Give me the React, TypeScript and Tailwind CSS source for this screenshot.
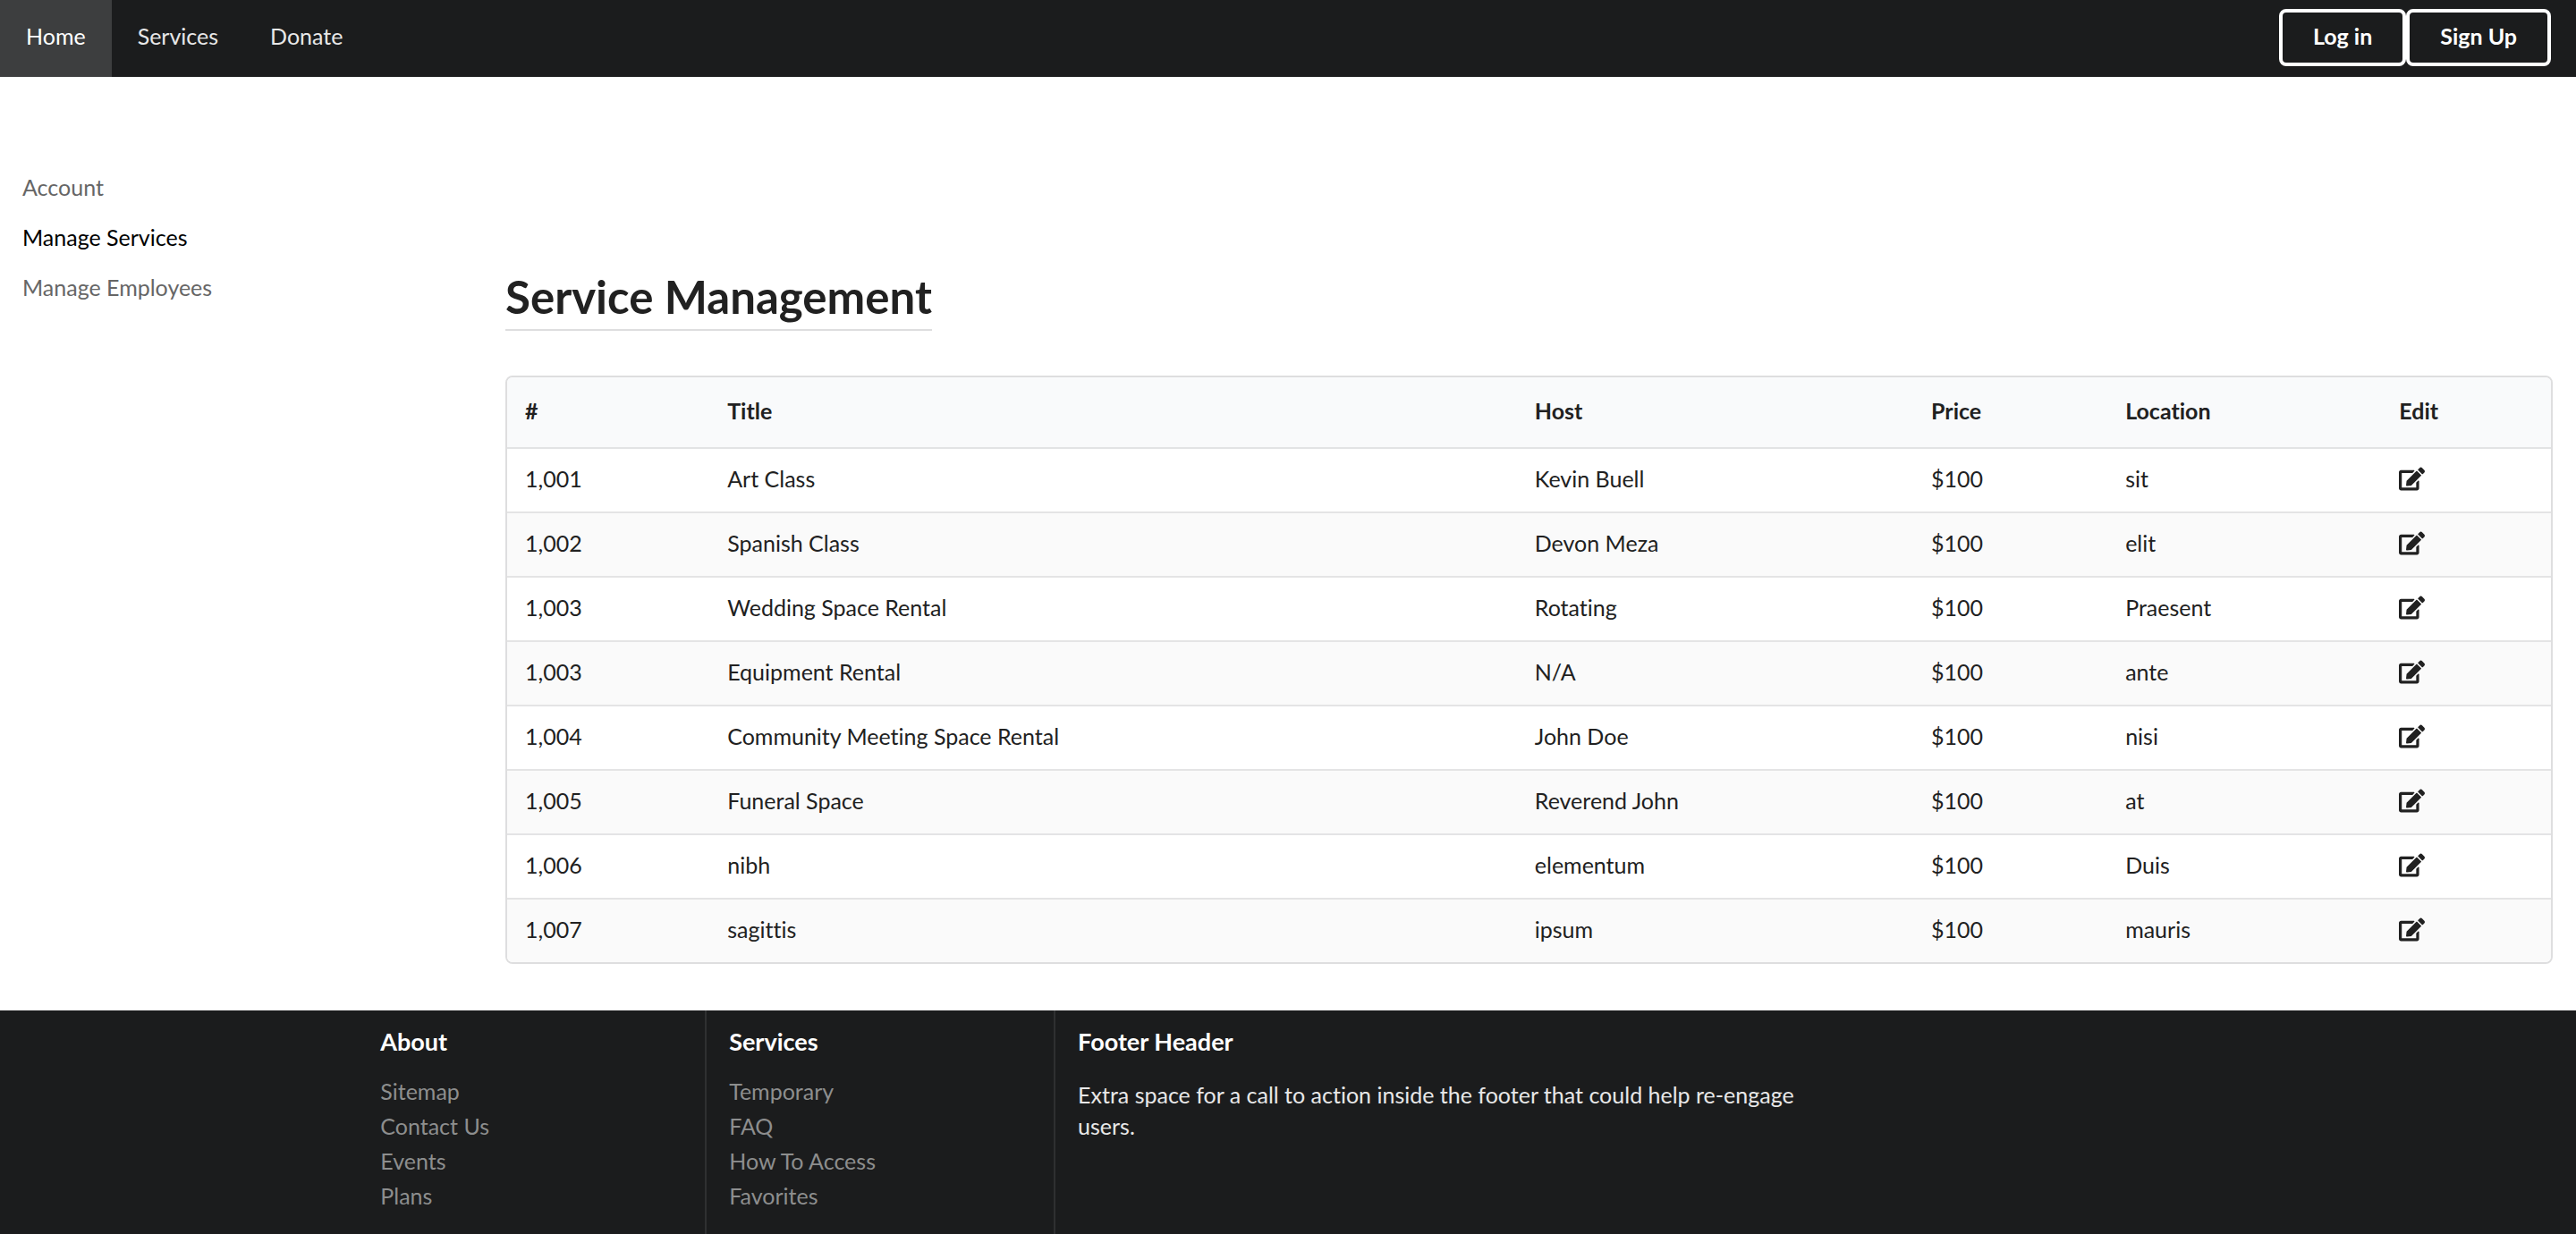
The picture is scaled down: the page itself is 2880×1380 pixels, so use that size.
import React from "react";
import { FaEdit } from "react-icons/fa";

const services = [
  ["1,001", "Art Class", "Kevin Buell", "$100", "sit"],
  ["1,002", "Spanish Class", "Devon Meza", "$100", "elit"],
  ["1,003", "Wedding Space Rental", "Rotating", "$100", "Praesent"],
  ["1,003", "Equipment Rental", "N/A", "$100", "ante"],
  ["1,004", "Community Meeting Space Rental", "John Doe", "$100", "nisi"],
  ["1,005", "Funeral Space", "Reverend John", "$100", "at"],
  ["1,006", "nibh", "elementum", "$100", "Duis"],
  ["1,007", "sagittis", "ipsum", "$100", "mauris"],
];

const columns = [
  { label: "#", width: "w-[9.9%]" },
  { label: "Title", width: "w-[39.5%]" },
  { label: "Host", width: "w-[19.4%]" },
  { label: "Price", width: "w-[9.5%]" },
  { label: "Location", width: "w-[13.4%]" },
  { label: "Edit", width: "w-[8.3%]" },
];

const footerLists = [
  { title: "About", links: ["Sitemap", "Contact Us", "Events", "Plans"] },
  { title: "Services", links: ["Temporary", "FAQ", "How To Access", "Favorites"] },
];

function TopBar() {
  return (
    <header className="flex h-[86px] items-stretch justify-between bg-[#1b1c1d] pr-7">
      <nav className="flex">
        <a href="#home" className="flex items-center bg-[#3d3e3f] px-[29px] pb-1.5 text-white">Home</a>
        <a href="#services" className="flex items-center px-[29px] pb-1.5 text-white/90">Services</a>
        <a href="#donate" className="flex items-center px-[29px] pb-1.5 text-white/90">Donate</a>
      </nav>
      <div className="flex items-center pb-0.5">
        <button type="button" className="h-16 rounded-lg border-4 border-white px-[34px] pb-1 font-bold text-white">Log in</button>
        <button type="button" className="h-16 rounded-lg border-4 border-white px-[34px] pb-1 font-bold text-white">Sign Up</button>
      </div>
    </header>
  );
}

function SideMenu() {
  return (
    <nav className="flex w-[18.75%] flex-col gap-5 px-[25px] pt-[105px]">
      <a href="#account" className="text-[#666]">Account</a>
      <a href="#manage-services" className="text-black">Manage Services</a>
      <a href="#manage-employees" className="text-[#666]">Manage Employees</a>
    </nav>
  );
}

function ServiceTable() {
  return (
    <div className="overflow-hidden rounded-lg border-2 border-[#dededf]">
      <table className="w-full table-fixed text-left">
        <thead>
          <tr className="h-[79px] bg-[#f9fafb]">
            {columns.map((c) => (
              <th key={c.label} scope="col" className={`${c.width} border-b-2 border-[#e2e3e4] px-5 pb-1 font-bold`}>
                {c.label}
              </th>
            ))}
          </tr>
        </thead>
        <tbody>
          {services.map((row, i) => (
            <tr key={i} className="h-[72px] border-b-2 border-[#e4e4e5] last:h-[71px] last:border-b-0 even:bg-[#fafafa]">
              {row.map((cell, j) => (
                <td key={j} className="px-5 pb-1">{cell}</td>
              ))}
              <td className="px-5 pb-1">
                <button type="button" aria-label={`Edit ${row[1]}`} className="block">
                  <FaEdit className="size-[29px]" />
                </button>
              </td>
            </tr>
          ))}
        </tbody>
      </table>
    </div>
  );
}

function Footer() {
  return (
    <footer className="bg-[#1b1c1d]">
      <div className="mx-auto flex w-[72.2%]">
        {footerLists.map((list) => (
          <section key={list.title} className="w-3/16 border-r-2 border-[#2f3031] px-[25px] pt-[19px] pb-[23px]">
            <h4 className="text-[27px] leading-8 font-bold text-white">{list.title}</h4>
            <ul className="pt-5">
              {list.links.map((link) => (
                <li key={link} className="leading-[39px]">
                  <a href="#footer" className="text-[#8d8e8e]">{link}</a>
                </li>
              ))}
            </ul>
          </section>
        ))}
        <section className="w-7/16 px-[25px] pt-[19px]">
          <h4 className="text-[27px] leading-8 font-bold text-white">Footer Header</h4>
          <p className="pt-[26px] leading-[35px] text-white/90">
            Extra space for a call to action inside the footer that could help re-engage users.
          </p>
        </section>
      </div>
    </footer>
  );
}

export default function App() {
  return (
    <div className="bg-white font-['Lato',sans-serif] text-[25px] leading-9 text-[#212121] [font-variant-ligatures:none]">
      <TopBar />
      <div className="flex">
        <SideMenu />
        <main className="min-w-0 flex-1 pt-[213px] pr-[26px] pb-[52px] pl-[25px]">
          <h1 className="mb-[50px] w-fit border-b-2 border-[#dededf] pb-1 text-[51px] leading-[65px] font-bold">
            Service Management
          </h1>
          <ServiceTable />
        </main>
      </div>
      <Footer />
    </div>
  );
}
